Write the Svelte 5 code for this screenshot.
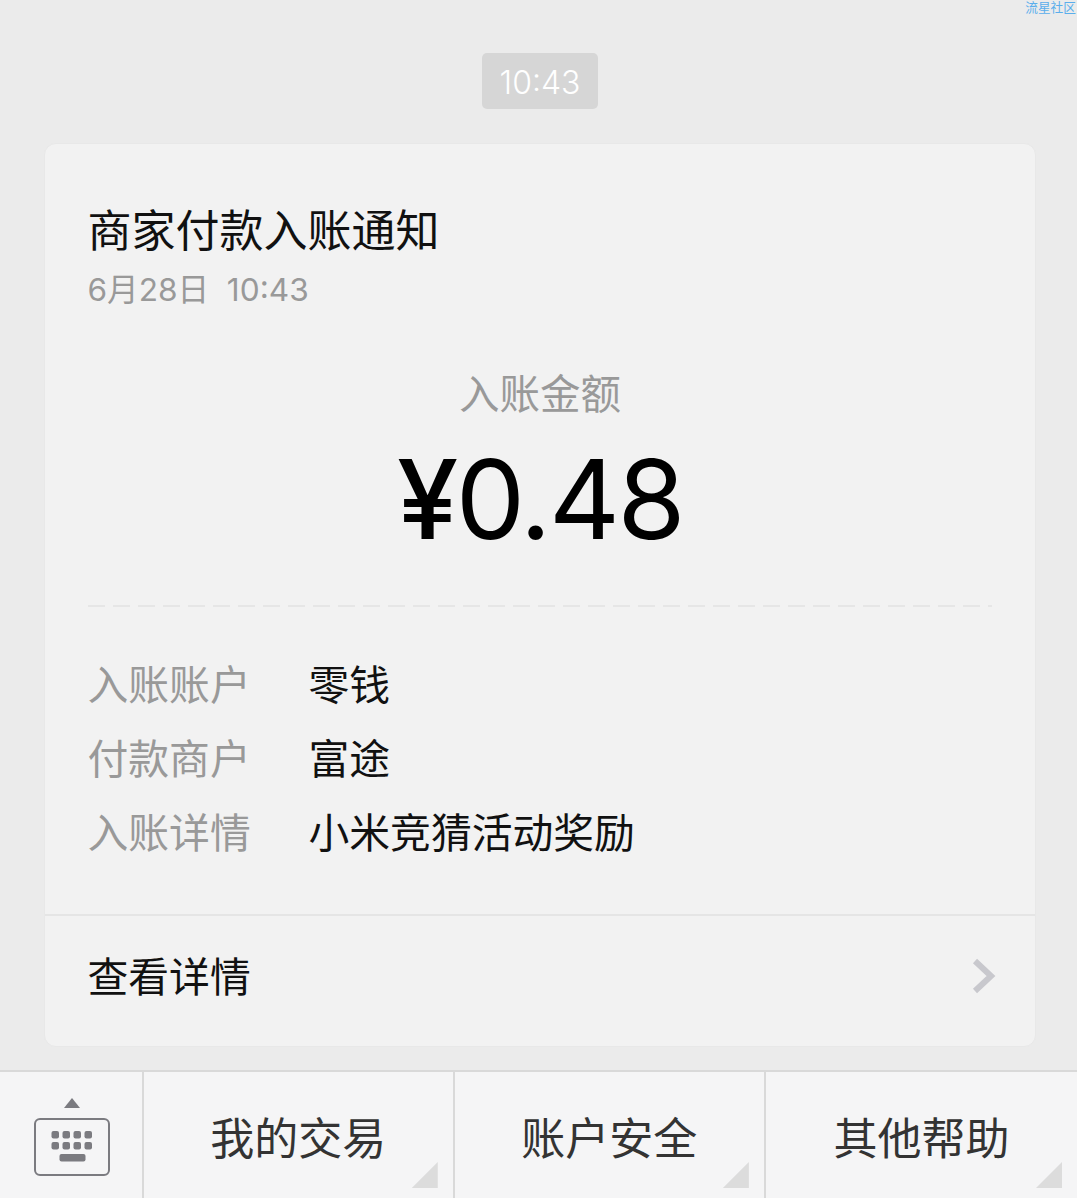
<script>
	const rows = [
		{ label: '入账账户', value: '零钱' },
		{ label: '付款商户', value: '富途' },
		{ label: '入账详情', value: '小米竞猜活动奖励' }
	];
	const menus = ['我的交易', '账户安全', '其他帮助'];
</script>

<div class="page">
	<span class="mark">流星社区</span>

	<div class="chat">
		<div class="time">10:43</div>

		<div class="card">
			<div class="head">
				<div class="title">商家付款入账通知</div>
				<div class="date">6月28日&nbsp;&nbsp;10:43</div>
			</div>

			<div class="sum">
				<div class="sum-label">入账金额</div>
				<div class="amount"><span class="yen">¥</span>0.48</div>
			</div>

			<div class="dash"></div>

			<div class="rows">
				{#each rows as r (r.label)}
					<div class="row">
						<span class="row-label">{r.label}</span>
						<span class="row-value">{r.value}</span>
					</div>
				{/each}
			</div>

			<div class="more">
				<span>查看详情</span>
				<svg class="chevron" width="26" height="36" viewBox="0 0 26 36">
					<path d="M4 3 L20 18 L4 33" fill="none" stroke="#c8c8cd" stroke-width="6" />
				</svg>
			</div>
		</div>
	</div>

	<div class="bar">
		<div class="kb">
			<svg width="78" height="80" viewBox="0 0 78 80">
				<path d="M39 0 L47 10 L31 10 Z" fill="#7b7b80" />
				<rect x="2" y="21" width="74" height="56" rx="5" fill="none" stroke="#7b7b80" stroke-width="2" />
				{#each [0, 1] as y (y)}
					{#each [0, 1, 2, 3] as x (x)}
						<rect x={18.5 + x * 11} y={33 + y * 11} width="7.5" height="7.5" rx="2" fill="#7b7b80" />
					{/each}
				{/each}
				<rect x="26.5" y="56" width="26" height="7.5" rx="2" fill="#7b7b80" />
			</svg>
		</div>
		{#each menus as m (m)}
			<div class="menu">
				<span>{m}</span>
				<i class="corner"></i>
			</div>
		{/each}
	</div>
</div>

<style>
	:global(body) {
		margin: 0;
		background: #ebebeb;
	}
	.page {
		position: relative;
		width: 1077px;
		height: 1198px;
		display: flex;
		flex-direction: column;
		background: #ebebeb;
		overflow: hidden;
		font-family: "Noto Sans CJK SC", "Inter", sans-serif;
		font-weight: 400;
	}
	.mark {
		position: absolute;
		top: 0;
		right: 1px;
		font-size: 12.7px;
		line-height: 14px;
		color: #5aaeec;
	}
	.chat {
		flex: 1;
		display: flex;
		flex-direction: column;
		align-items: center;
		padding: 53px 0 0 2px;
	}
	.time {
		width: 116px;
		height: 56px;
		margin-left: 1px;
		background: #d6d6d6;
		border-radius: 5px;
		color: #fff;
		font-family: "Inter", sans-serif;
		font-weight: 300;
		font-size: 32px;
		line-height: 60px;
		text-align: center;
	}
	.card {
		width: 992px;
		height: 904px;
		margin-top: 34px;
		box-sizing: border-box;
		background: #f2f2f2;
		border: 1px solid #e8e8e8;
		border-radius: 12px;
		display: flex;
		flex-direction: column;
	}
	.head {
		padding: 54px 43px 0;
	}
	.title {
		font-size: 44px;
		line-height: 60px;
		color: #111;
	}
	.date {
		margin-top: 7px;
		font-size: 31.6px;
		line-height: 50px;
		color: #999;
		font-family: "Inter", "Noto Sans CJK SC", sans-serif;
	}
	.sum {
		margin: 49px 0 0 1px;
		text-align: center;
	}
	.sum-label {
		font-size: 40.5px;
		line-height: 56px;
		color: #999;
	}
	.amount {
		margin-top: 14px;
		font-family: "Inter", sans-serif;
		font-size: 110px;
		line-height: 130px;
		letter-spacing: -2.5px;
		color: #000;
	}
	.yen {
		font-weight: 500;
	}
	.dash {
		margin: 41px 43px 0;
		height: 2px;
		background: repeating-linear-gradient(to right, #e6e6e6 0 17px, transparent 17px 25px);
	}
	.rows {
		margin-top: 38px;
		padding: 0 43px;
	}
	.row {
		display: flex;
		height: 74px;
		align-items: center;
		font-size: 40.8px;
	}
	.row-label {
		width: 221px;
		color: #999;
	}
	.row-value {
		color: #111;
	}
	.more {
		margin-top: 47px;
		flex: 1;
		border-top: 2px solid #e5e5e5;
		padding: 0 38px 13px 43px;
		display: flex;
		align-items: center;
		justify-content: space-between;
		font-size: 40.8px;
		color: #111;
	}
	.chevron {
		margin-top: 3px;
	}
	.bar {
		height: 128px;
		box-sizing: border-box;
		display: flex;
		background: #f5f5f6;
		border-top: 2px solid #d9d9d9;
	}
	.kb {
		width: 144px;
		box-sizing: border-box;
		border-right: 2px solid #d9d9d9;
		display: flex;
		justify-content: center;
		padding: 26px 0 0 2px;
	}
	.menu {
		position: relative;
		width: 312px;
		box-sizing: border-box;
		border-right: 2px solid #d9d9d9;
		display: flex;
		align-items: center;
		justify-content: center;
		font-size: 44px;
		color: #333;
		padding-top: 2px;
	}
	.menu:last-child {
		border-right: 0;
	}
	.corner {
		position: absolute;
		right: 15px;
		bottom: 10px;
		width: 26px;
		height: 26px;
		background: #dcdcdc;
		clip-path: polygon(100% 0, 100% 100%, 0 100%);
	}
</style>
